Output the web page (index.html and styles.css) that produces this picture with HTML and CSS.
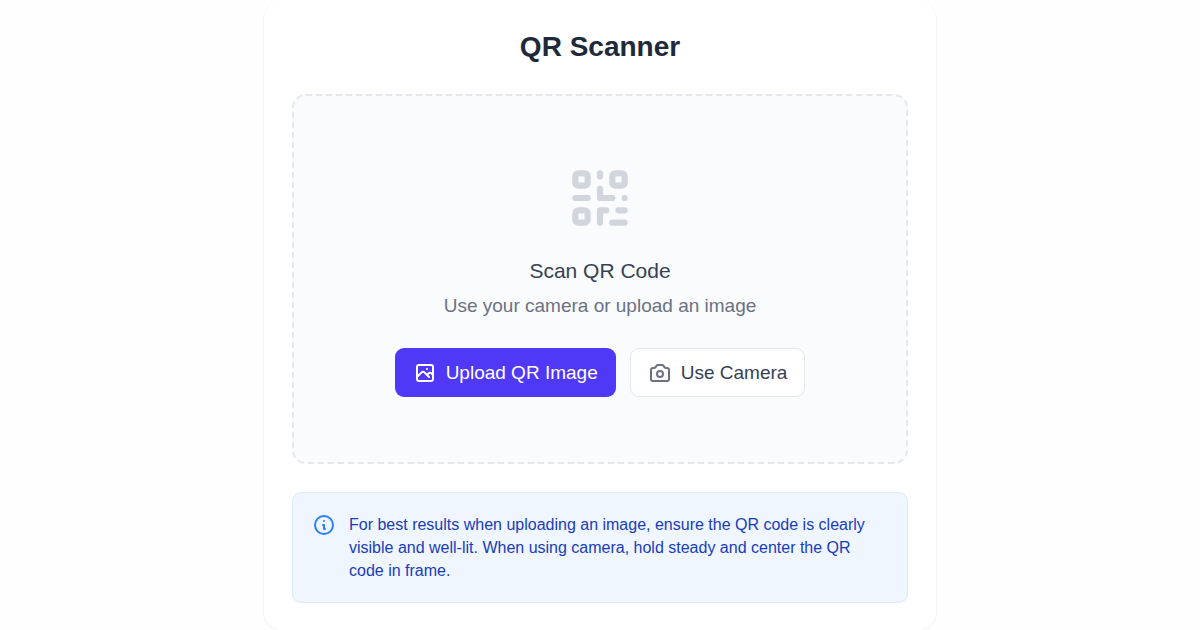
FILE: index.html
```html
<!DOCTYPE html>
<html lang="en">
<head>
    <meta charset="UTF-8">
    <meta name="viewport" content="width=device-width, initial-scale=1.0">
    <title>QR Scanner</title>
    <link rel="stylesheet" href="styles.css">
</head>
<body>
    <main class="scanner-card">
        <h1>QR Scanner</h1>
        <section class="drop-zone">
            <svg class="icon qr-icon" viewBox="0 0 24 24" aria-hidden="true">
                <path d="M12 4v1m6 11h2m-6 0h-2v4m0-11v3m0 0h.01M12 12h4.01M16 20h4M4 12h4m12 0h.01M5 8h2a1 1 0 001-1V5a1 1 0 00-1-1H5a1 1 0 00-1 1v2a1 1 0 001 1zm12 0h2a1 1 0 001-1V5a1 1 0 00-1-1h-2a1 1 0 00-1 1v2a1 1 0 001 1zM5 20h2a1 1 0 001-1v-2a1 1 0 00-1-1H5a1 1 0 00-1 1v2a1 1 0 001 1z"/>
            </svg>
            <h2>Scan QR Code</h2>
            <p class="hint">Use your camera or upload an image</p>
            <div class="actions">
                <button type="button" class="btn btn-primary">
                    <svg class="icon" viewBox="0 0 24 24" aria-hidden="true">
                        <path d="M4 16l4.586-4.586a2 2 0 012.828 0L16 16m-2-2l1.586-1.586a2 2 0 012.828 0L20 14m-6-6h.01M6 20h12a2 2 0 002-2V6a2 2 0 00-2-2H6a2 2 0 00-2 2v12a2 2 0 002 2z"/>
                    </svg>
                    Upload QR Image
                </button>
                <button type="button" class="btn btn-secondary">
                    <svg class="icon" viewBox="0 0 24 24" aria-hidden="true">
                        <path d="M3 9a2 2 0 012-2h.93a2 2 0 001.664-.89l.812-1.22A2 2 0 0110.07 4h3.86a2 2 0 011.664.89l.812 1.22A2 2 0 0018.07 7H19a2 2 0 012 2v9a2 2 0 01-2 2H5a2 2 0 01-2-2V9z"/>
                        <path d="M15 13a3 3 0 11-6 0 3 3 0 016 0z"/>
                    </svg>
                    Use Camera
                </button>
            </div>
        </section>
        <aside class="info-box">
            <svg class="icon" viewBox="0 0 24 24" aria-hidden="true">
                <path d="M13 16h-1v-4h-1m1-4h.01M21 12a9 9 0 11-18 0 9 9 0 0118 0z"/>
            </svg>
            <p>For best results when uploading an image, ensure the QR code is clearly visible and well-lit. When using camera, hold steady and center the QR code in frame.</p>
        </aside>
    </main>
</body>
</html>
```
FILE: styles.css
```css
* {
    box-sizing: border-box;
}

body {
    margin: 0;
    background-color: #fefefe;
    font-family: "Liberation Sans", Arial, sans-serif;
}

h1,
h2,
p {
    margin: 0;
}

.scanner-card {
    max-width: 674px;
    margin: 0 auto;
    padding: 28px 28px 27px;
    background-color: #fff;
    border: 1px solid #f3f4f6;
    border-top: none;
    border-radius: 19px;
}

h1 {
    margin-bottom: 28px;
    color: #1e2939;
    font-size: 28px;
    line-height: 38px;
    text-align: center;
}

.icon {
    flex: none;
    width: 24px;
    height: 24px;
    fill: none;
    stroke: currentColor;
    stroke-width: 2;
    stroke-linecap: round;
    stroke-linejoin: round;
}

/* dashed upload area */
.drop-zone {
    display: flex;
    flex-direction: column;
    align-items: center;
    padding: 65px 28px;
    background-color: #f9fbfd;
    border: 2px dashed #e5e7eb;
    border-radius: 14px;
}

.qr-icon {
    width: 74px;
    height: 74px;
    margin-bottom: 22px;
    color: #d1d5dc;
}

h2 {
    margin-bottom: 7px;
    color: #364153;
    font-size: 21px;
    font-weight: normal;
    line-height: 28px;
}

.hint {
    margin-bottom: 28px;
    color: #6a7282;
    font-size: 19px;
    line-height: 28px;
}

.actions {
    display: flex;
    flex-wrap: wrap;
    justify-content: center;
    gap: 14px;
}

.btn {
    display: flex;
    align-items: center;
    gap: 9px;
    padding: 10px 17px;
    border: 1px solid transparent;
    border-radius: 9px;
    font-family: inherit;
    font-size: 19px;
    line-height: 27px;
    cursor: pointer;
}

.btn-primary {
    background-color: #4f39f6;
    color: #fff;
}

.btn-secondary {
    background-color: #fff;
    border-color: #e5e7eb;
    color: #364153;
}

.btn-secondary .icon {
    color: #6a7282;
}

/* tips */
.info-box {
    display: flex;
    gap: 13px;
    margin-top: 28px;
    padding: 20px 19px;
    background-color: #eff6ff;
    border: 1px solid #dbeafe;
    border-radius: 9px;
    color: #193cb8;
    font-size: 16px;
    line-height: 23px;
}

.info-box .icon {
    color: #2b7fff;
}
```
